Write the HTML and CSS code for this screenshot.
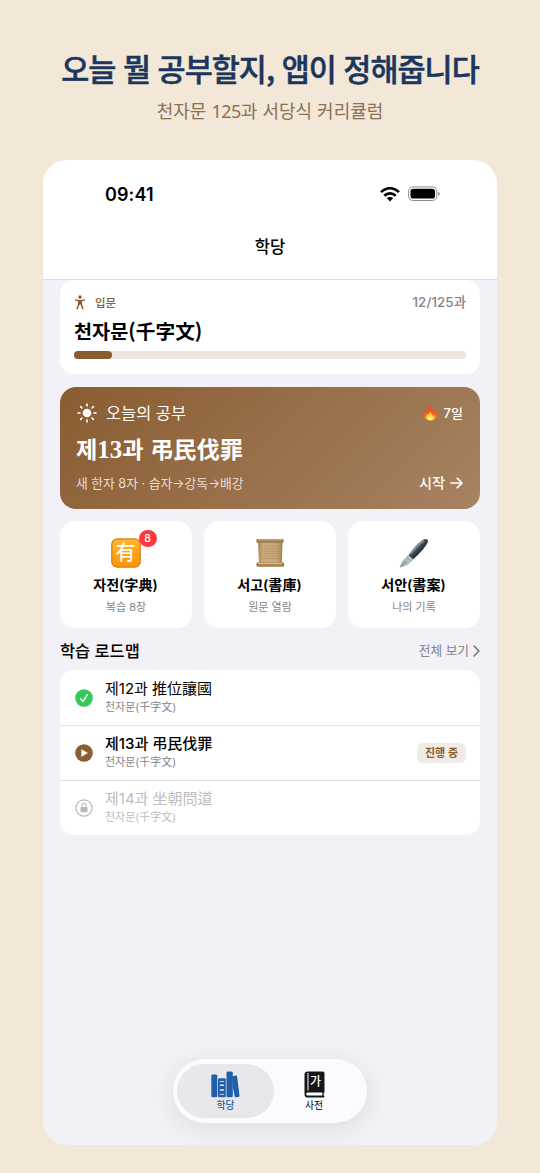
FILE: index.html
```
<!DOCTYPE html>
<html lang="ko">
<head>
<meta charset="utf-8">
<title>학당</title>
<link rel="stylesheet" href="styles.css">
</head>
<body>
<header class="promo">
  <h1>오늘 뭘 공부할지, 앱이 정해줍니다</h1>
  <p>천자문 <span class="num">125</span>과 서당식 커리큘럼</p>
</header>
<main class="phone">
  <div class="topbar">
    <div class="status">
      <span class="clock">09:41</span>
      <span class="signals">
        <svg width="20" height="15" viewBox="0 0 20 15"><g fill="none" stroke="#000" stroke-width="2.700"><path d="M1.100 5.200C6-.1 14-.1 18.900 5.200"/><path d="M4.300 8.700C7.500 5.500 12.500 5.500 15.700 8.700"/></g><path d="M6.800 11.100q3.200-2.400 6.400 0L10 14.400z"/></svg>
        <svg width="32" height="16" viewBox="0 0 32 16"><rect x=".6" y=".9" width="28.200" height="13.600" rx="4.300" fill="none" stroke="#8b8b8b"/><rect x="2.500" y="2.800" width="24.500" height="9.800" rx="2.700"/><path d="M30.200 5.500q1.700.7 1.700 2.200t-1.700 2.200z" fill="#999"/></svg>
      </span>
    </div>
    <h2>학당</h2>
  </div>
  <div class="content">
    <section class="progress">
      <div class="row level">
        <span class="lvl"><svg width="12" height="15" viewBox="0 0 12 15"><circle cx="6" cy="2" r="1.700" fill="#8a5c31"/><path d="M1.500 4.900l3 .8h3l3-.8M5.900 6v3M4.700 5.900v3.400l-1.500 4.400M7.300 5.900v3.400l1.500 4.400" fill="none" stroke="#8a5c31" stroke-width="1.500" stroke-linecap="round" stroke-linejoin="round"/></svg><b>입문</b></span>
        <span class="count">12/125과</span>
      </div>
      <h3>천자문(千字文)</h3>
      <div class="bar"><i></i></div>
    </section>
    <section class="today">
      <div class="row">
        <span class="lead"><svg width="20" height="20" viewBox="0 0 20 20"><circle cx="10" cy="10" r="4.300" fill="#fff"/><path d="M10 1v2M10 17v2M1 10h2M17 10h2M3.600 3.600l1.400 1.400M15 15l1.400 1.400M3.600 16.400L5 15M15 5l1.400-1.400" stroke="#fff" stroke-width="1.600" stroke-linecap="round"/></svg><span>오늘의 공부</span></span>
        <span class="streak"><svg width="15" height="17" viewBox="0 0 15 17"><defs><linearGradient id="fl" x2="0" y2="1"><stop stop-color="#f0401c"/><stop offset=".65" stop-color="#fb621b"/><stop offset="1" stop-color="#ff902a"/></linearGradient></defs><path d="M7.300 16.500C3 16.500.6 14.200.9 10.800c.1-2 .8-3 1.200-4.300.8.600 1.200 1.200 1.400 2C5 5.600 4.900 2.600 6.200.4c.7 2.400 3 3.600 3.600 6.800.5-.5.7-1.100.7-1.800 2.400 2 3.500 3.900 3.500 6 0 3.100-2.500 5.100-6.700 5.100z" fill="url(#fl)"/><path d="M7.400 16.300c-2.700 0-4.200-1.400-4.100-3.400.1-1.300.8-2 1.200-2.900.5.300.8.800.9 1.400.9-1.200.8-2.600 1.800-3.800.4 1.800 1.900 2.600 2.200 4.300.4-.4.600-.9.600-1.400 1 1 1.500 1.900 1.500 2.900 0 1.800-1.500 2.900-4.100 2.900z" fill="#ffdc3c"/><ellipse cx="7.400" cy="14.600" rx="1.900" ry="1.400" fill="#fff3ab"/></svg><span>7일</span></span>
      </div>
      <h3>제<em>13</em>과 弔民伐罪</h3>
      <div class="row foot">
        <span class="steps">새 한자 8자 · 습자→강독→배강</span>
        <span class="start"><span>시작</span><svg width="13" height="12" viewBox="0 0 13 12"><path d="M1 6h11M7.300 1.300L12 6l-4.700 4.700" fill="none" stroke="#fff" stroke-width="1.700" stroke-linecap="round" stroke-linejoin="round"/></svg></span>
      </div>
    </section>
    <section class="tiles">
      <article>
        <div class="pic"><svg width="30" height="30" viewBox="0 0 30 30"><defs><linearGradient id="or" x2="0" y2="1"><stop stop-color="#ffb52e"/><stop offset="1" stop-color="#ff9300"/></linearGradient></defs><rect x=".8" y=".8" width="28.400" height="28.400" rx="5.500" fill="url(#or)" stroke="#d28324" stroke-width="1.300"/></svg><span class="glyph">有</span><span class="badge">8</span></div>
        <h4>자전(字典)</h4><p>복습 8장</p>
      </article>
      <article>
        <div class="pic"><svg width="30" height="30" viewBox="0 0 30 30"><defs><linearGradient id="sc"><stop stop-color="#a88455"/><stop offset=".2" stop-color="#cfae7e"/><stop offset=".8" stop-color="#c6a476"/><stop offset="1" stop-color="#a17b4e"/></linearGradient></defs><path d="M3 4h24.500l-.6 21H4z" fill="url(#sc)"/><path d="M6 8h18M6 10.500h18M6 13h18M6 15.500h18M6 18h18M6 20.500h18" stroke="#aa8a5e" stroke-width=".7" stroke-dasharray="2 .7"/><rect x="2" y="1.200" width="26" height="3.600" rx=".8" fill="#9c7a4e"/><path d="M3 2.200h24" stroke="#c6a472"/><rect x="2" y="24.300" width="26.500" height="4.400" rx="1.500" fill="#a27d50"/><path d="M3 25.500h24" stroke="#dfbd89" stroke-width="1.400"/><path d="M2 1.300v3.300M28 1.300v3.300M2 24.800v3.700M28.500 24.800v3.700" stroke="#6f5434" stroke-width=".8"/></svg></div>
        <h4>서고(書庫)</h4><p>원문 열람</p>
      </article>
      <article>
        <div class="pic"><svg width="30" height="30" viewBox="0 0 30 30"><defs><linearGradient id="pn" x1=".3" y1=".3" x2=".7" y2=".7"><stop stop-color="#8394a1"/><stop offset=".5" stop-color="#3a444e"/><stop offset="1" stop-color="#15191e"/></linearGradient></defs><path d="M9.200 18C13 11.500 20.500 3.300 25.500 1.100c3.200-.9 4.200 1.400 2.900 4C26 9.600 19.800 16.700 13.800 21.500z" fill="url(#pn)"/><path d="M12 15.500C16.500 9.700 20.500 5.500 25 2.900" stroke="#8d9fac" stroke-width="1.200" fill="none"/><path d="M9.400 17.400l4.700 3.900-1.600 1.500-4.500-3.700z" fill="#c9d4da" stroke="#687884" stroke-width=".6"/><path d="M7.900 19.300l4.200 3.500-3.500 3.900L1.200 29l2.500-6.200z" fill="#b3bec4" stroke="#8b979e" stroke-width=".5"/><path d="M1.500 28.800l5.800-5.600" stroke="#4d585f" stroke-width=".8"/></svg></div>
        <h4>서안(書案)</h4><p>나의 기록</p>
      </article>
    </section>
    <div class="row heading"><h3>학습 로드맵</h3><span class="more"><span>전체 보기</span><svg width="7" height="12" viewBox="0 0 7 12"><path d="M1.200 1.200L5.900 6l-4.700 4.800" fill="none" stroke="#7d7d82" stroke-width="1.700" stroke-linecap="round" stroke-linejoin="round"/></svg></span></div>
    <section class="list">
      <div class="item">
        <svg width="18" height="18" viewBox="0 0 18 18"><circle cx="9" cy="9" r="8.800" fill="#34c759"/><path d="M5.500 9.600l2.500 2.900 4.400-6.800" fill="none" stroke="#fff" stroke-width="1.400" stroke-linecap="round" stroke-linejoin="round"/></svg>
        <div><h5>제12과 推位讓國</h5><p>천자문(千字文)</p></div>
      </div>
      <div class="item current">
        <svg width="18" height="18" viewBox="0 0 18 18"><circle cx="9" cy="9" r="8.800" fill="#8a5c31"/><path d="M6.700 5.700v6.600l5.600-3.300z" fill="#fff" stroke="#fff" stroke-width=".7" stroke-linejoin="round"/></svg>
        <div><h5>제13과 弔民伐罪</h5><p>천자문(千字文)</p></div><span class="tag">진행 중</span>
      </div>
      <div class="item locked">
        <svg width="18" height="18" viewBox="0 0 18 18"><circle cx="9" cy="9" r="8.100" fill="none" stroke="#b9b9bb" stroke-width="1.200"/><rect x="5.500" y="8" width="7" height="5.200" rx="1" fill="#b9b9bb"/><path d="M6.900 8V6.400a2.100 2.100 0 0 1 4.200 0V8" fill="none" stroke="#b9b9bb" stroke-width="1.100"/></svg>
        <div><h5>제14과 坐朝問道</h5><p>천자문(千字文)</p></div>
      </div>
    </section>
  </div>
  <nav class="tabs">
    <a class="on"><svg width="29" height="27" viewBox="0 0 29 27"><g fill="#2160a8"><rect x=".3" y="3.400" width="6" height="22.800" rx="1.300"/><rect x="7" y="7.200" width="7.800" height="19" rx="1.300"/><rect x="15.500" y=".5" width="6.300" height="25.700" rx="1.300"/><path d="M21 5.300l3.700-.7q1.200-.2 1.400.9l2.400 18.900q.1 1.200-1 1.500l-2.500.3q-1.200.1-1.400-1L22 17z"/></g><path d="M8.800 10.500h4.200M8.800 23.300h4.200" stroke="#dbe3ef" stroke-width=".9"/><path d="M8.800 13.500h4.200v1.400H8.800zM8.800 18.300h4.200v1.400H8.800z" fill="#e2e7ef"/></svg><span>학당</span></a>
    <a><span class="book"><svg width="21" height="27" viewBox="0 0 21 27"><path d="M3.500.5h15q2 0 2 2v18.200q0 1-.8 1.400v2.400q.8.300.8 1.100 0 .9-1 .9h-16q-3 0-3-3.200V3.700Q.5.500 3.500.5z" fill="#16161a"/><path d="M4 2v17.500" stroke="#fff" stroke-width="1"/><path d="M3.500 21.600h14.800v2.900H3.500q-1.300-.2-1.300-1.400t1.300-1.500z" fill="#fff"/></svg><b>가</b></span><span>사전</span></a>
  </nav>
</main>
</body>
</html>
```
FILE: styles.css
```
* { box-sizing: border-box; margin: 0; padding: 0; }
body {
  width: 540px; height: 1173px; overflow: hidden;
  background: #f3e7d7; color: #000;
  font-family: Inter, "Noto Sans CJK KR", sans-serif;
  display: flex; flex-direction: column; align-items: center;
}
svg { display: block; flex: none; }
h1, h2, h3, h4, h5, p, span, b { white-space: nowrap; }
.promo { height: 160px; padding-top: 48px; text-align: center; font-family: "Noto Sans CJK KR", sans-serif; }
.promo h1 { font-size: 30.500px; line-height: 40px; font-weight: 500; letter-spacing: -.98px; color: #1b365d; -webkit-text-stroke: .5px #1b365d; }
.promo p { font-size: 18px; line-height: 26px; margin-top: 9px; color: #8b7157; }
.num { font-family: "Noto Sans", sans-serif; letter-spacing: -.5px; }
.phone { position: relative; width: 454px; height: 985px; border-radius: 24px; background: #f2f1f7; overflow: hidden; }
.topbar { height: 120px; background: #fff; border-bottom: 1px solid #dededf; padding-top: 22px; }
.status { height: 24px; display: flex; align-items: center; justify-content: space-between; padding: 0 57px 0 62px; }
.clock { font-size: 18px; font-weight: 600; letter-spacing: .1px; }
.signals { display: flex; align-items: center; gap: 8px; }
.topbar h2 { margin-top: 29px; text-align: center; font-size: 16.5px; line-height: 24px; font-weight: 500; }
.content { padding: 0 17px; }
.row { display: flex; align-items: center; justify-content: space-between; }
.progress { height: 94px; border-radius: 14px; background: #fff; padding: 12px 14px 0; }
.level { height: 20px; }
.lvl { display: flex; align-items: center; gap: 9px; color: #8a5c31; font-size: 11.5px; }
.lvl b { font-weight: 500; }
.count { font-size: 13.3px; line-height: 20px; color: #828286; font-weight: 500; letter-spacing: .1px; }
.progress h3 { font-size: 19.7px; line-height: 26px; margin-top: 6px; font-weight: 700; font-family: "Noto Sans CJK KR", sans-serif; }
.bar { height: 8px; margin-top: 7px; background: #ece6e0; border-radius: 4px; }
.bar i { display: block; height: 8px; width: 38px; border-radius: 4px; background: #8a5c31; }
.today { height: 122px; margin-top: 13px; padding: 13px 17px 0 16px; border-radius: 16px; color: #fff; background: linear-gradient(135deg, #8a5c31, #a68362); }
.today .row { height: 24px; }
.lead { display: flex; align-items: center; gap: 9px; font-size: 16.4px; font-weight: 400; padding-left: 1px; }
.lead svg { position: relative; top: 1px; }
.streak { display: flex; align-items: center; gap: 6px; font-size: 13px; font-weight: 500; }
.today h3 { height: 32px; line-height: 32px; margin-top: 8px; font-size: 23.2px; font-weight: 700; font-family: "Noto Sans CJK KR", sans-serif; }
.today em { font: bold 25px "Liberation Serif", serif; }
.today .foot { margin-top: 6px; }
.steps { font-size: 12.75px; color: #e8ded5; }
.start { display: flex; align-items: center; gap: 5px; font-size: 14.2px; line-height: 20px; padding-top: 1px; font-weight: 500; }
.tiles { display: grid; grid-template-columns: repeat(3, 1fr); gap: 12px; margin-top: 12px; }
.tiles article { height: 107px; border-radius: 15px; background: #fff; display: flex; flex-direction: column; align-items: center; padding-top: 17px; }
.pic { position: relative; height: 30px; left: -.5px; }
.glyph { position: absolute; inset: 0; text-align: center; color: #fff; font: 500 20px/28px "Noto Sans CJK KR", sans-serif; }
.badge { position: absolute; left: 28px; top: -8px; width: 18px; height: 17px; border-radius: 9px; background: #ff383c; color: #fff; font-size: 10.5px; line-height: 17px; font-weight: 500; text-align: center; }
.tiles h4 { font-size: 14.1px; line-height: 20px; margin-top: 7px; font-weight: 600; position: relative; left: -.5px; }
.tiles p { font-size: 11px; line-height: 16px; margin-top: 4px; color: #858589; }
.heading { height: 24px; margin-top: 11px; }
.heading h3 { font-size: 16.4px; line-height: 24px; font-weight: 500; }
.more { display: flex; align-items: center; gap: 4px; font-size: 12.7px; line-height: 18px; color: #858589; }
.list { margin-top: 7px; border-radius: 14px; background: #fff; height: 165px; }
.item { display: flex; align-items: center; gap: 12px; height: 55px; padding: 0 14px 0 15px; border-top: 1px solid #e4e4e7; }
.item:first-child { border-color: transparent; }
.item h5 { font-size: 15px; line-height: 18px; font-weight: 400; }
.item p { font-size: 11px; line-height: 18px; color: #858589; }
.item.current h5 { font-weight: 500; }
.locked h5, .locked p { color: #bcbcbf; }
.tag { margin-left: auto; height: 20px; width: 49px; text-align: center; line-height: 20px; border-radius: 6px; background: #f1ebe6; color: #8a5c31; font-size: 11px; font-weight: 600; }
.tabs { position: absolute; left: 130px; top: 899px; width: 194px; height: 64px; border-radius: 32px; background: #fbfaff; padding: 5px 4px; display: flex; box-shadow: 0 5px 26px rgba(40, 40, 60, .10); }
.tabs a { width: 97px; height: 54px; border-radius: 27px; display: flex; flex-direction: column; align-items: center; padding-top: 7px; font-size: 9.8px; line-height: 14px; font-weight: 400; }
.tabs a + a { width: 80px; }
.tabs .on { background: #e8e8ec; color: #2160a8; font-weight: 500; }
.tabs a > span:last-child { margin-top: 1px; }
.book { position: relative; height: 27px; }
.book b { position: absolute; left: 6.500px; top: 2px; color: #fff; font-size: 12px; line-height: 17px; font-weight: 500; }
```
